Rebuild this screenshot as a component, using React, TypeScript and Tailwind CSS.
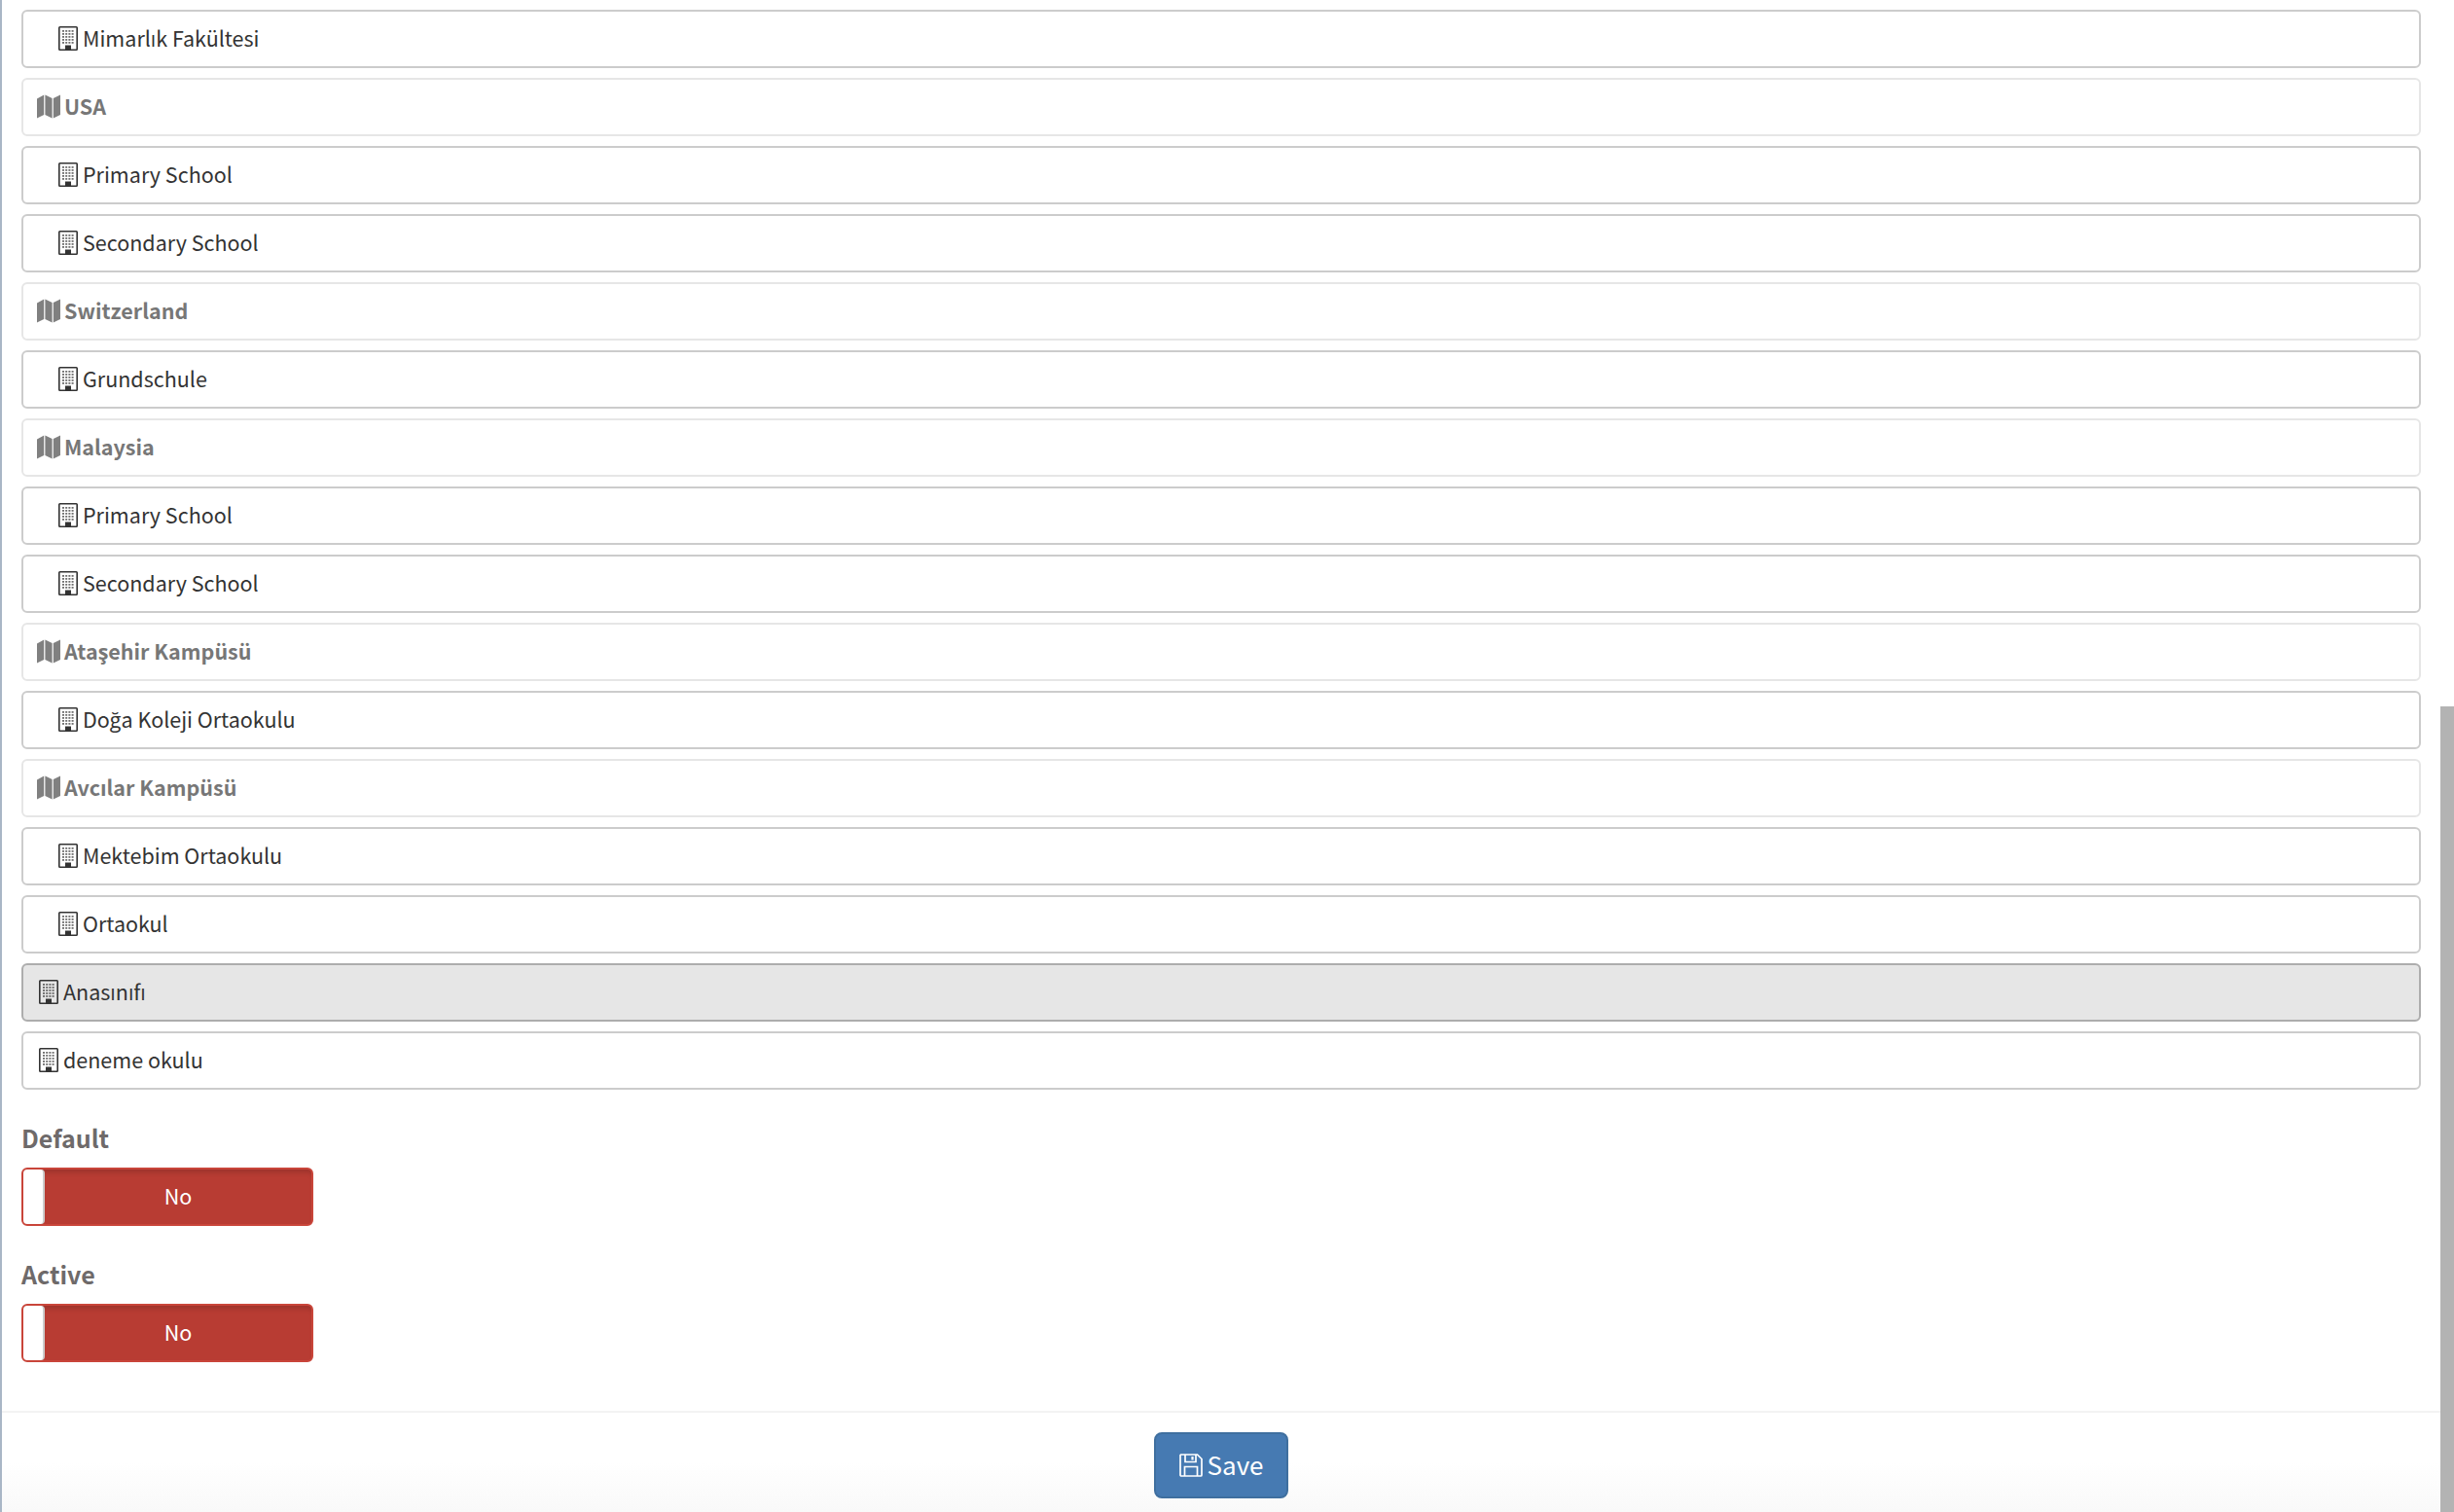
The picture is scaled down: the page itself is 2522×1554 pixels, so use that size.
type Row = { label: string; kind: "group" | "child" | "plain"; selected?: boolean };

const rows: Row[] = [
  { label: "Mimarlık Fakültesi", kind: "child" },
  { label: "USA", kind: "group" },
  { label: "Primary School", kind: "child" },
  { label: "Secondary School", kind: "child" },
  { label: "Switzerland", kind: "group" },
  { label: "Grundschule", kind: "child" },
  { label: "Malaysia", kind: "group" },
  { label: "Primary School", kind: "child" },
  { label: "Secondary School", kind: "child" },
  { label: "Ataşehir Kampüsü", kind: "group" },
  { label: "Doğa Koleji Ortaokulu", kind: "child" },
  { label: "Avcılar Kampüsü", kind: "group" },
  { label: "Mektebim Ortaokulu", kind: "child" },
  { label: "Ortaokul", kind: "child" },
  { label: "Anasınıfı", kind: "plain", selected: true },
  { label: "deneme okulu", kind: "plain" },
];

function BuildingIcon() {
  const dots = [];
  for (let r = 0; r < 5; r++) {
    for (let c = 0; c < 4; c++) {
      dots.push(<rect key={`${r}-${c}`} x={4 + c * 3.2} y={4 + r * 3} width="2" height="1.8" fill="currentColor" opacity="0.7" />);
    }
  }
  return (
    <svg viewBox="0 0 20 25" className="w-[20px] h-[25px] shrink-0 text-[#333]">
      <rect x="0.8" y="0.8" width="18.4" height="23.4" rx="0.8" fill="none" stroke="currentColor" strokeWidth="1.6" />
      {dots}
      <rect x="7" y="19.5" width="6" height="4.5" fill="currentColor" />
    </svg>
  );
}

function MapIcon() {
  return (
    <svg viewBox="0 0 24 25" className="w-[24px] h-[25px] shrink-0 text-[#808080]">
      <path d="M0 4.5 L7.2 0.5 V21 L0 24.5 Z" fill="currentColor" />
      <path d="M8.4 0.5 L15.6 4 V24.5 L8.4 21 Z" fill="currentColor" />
      <path d="M16.8 4 L24 0.5 V21 L16.8 24.5 Z" fill="currentColor" />
    </svg>
  );
}

function SaveIcon() {
  return (
    <svg viewBox="0 0 24 24" className="w-[24px] h-[24px] shrink-0 mt-[4px]" fill="none" stroke="currentColor" strokeWidth="1.7">
      <path d="M1.6 1H18.5L23 5.5V22A1 1 0 0 1 22 23H2A1 1 0 0 1 1 22V1.6Z" />
      <path d="M6 1V8.5H17V1" />
      <path d="M5.5 23V13.5H18.5V23" />
      <path d="M13.5 3V6.5" strokeWidth="2.2" />
    </svg>
  );
}

function ListRow({ row }: { row: Row }) {
  if (row.kind === "group") {
    return (
      <div className="h-[60px] flex items-center pl-[14px] pb-[2px] gap-[4px] rounded-[6px] border-2 border-[#e6e6e6] bg-white text-[21.5px] font-bold text-[#777]">
        <MapIcon />
        <span>{row.label}</span>
      </div>
    );
  }
  return (
    <div
      className={
        "h-[60px] flex items-center pb-[2px] gap-[5px] rounded-[6px] border-2 text-[21.5px] text-[#333] " +
        (row.kind === "child" ? "pl-[36px] " : "pl-[16px] ") +
        (row.selected ? "border-[#adadad] bg-[#e6e6e6]" : "border-[#ccc] bg-white")
      }
    >
      <BuildingIcon />
      <span>{row.label}</span>
    </div>
  );
}

function NoToggle({ label }: { label: string }) {
  return (
    <div>
      <div className="text-[25px] leading-[38px] font-bold text-[#6e6a6a] mb-[12px]">{label}</div>
      <div className="relative w-[300px] h-[60px] rounded-[6px] border-2 border-[#c9453a] bg-[#b83c33] shadow-[inset_0_6px_5px_-3px_rgba(0,0,0,0.15)] flex items-center justify-center pl-[22px] pb-[2px] text-[21.5px] text-white">
        No
        <div className="absolute left-0 top-0 bottom-0 w-[22px] rounded-[4px] bg-white border-r-2 border-[#ccc]" />
      </div>
    </div>
  );
}

export default function App() {
  return (
    <div
      className="relative w-[2522px] h-[1554px] overflow-hidden bg-white flex border-l-2 border-[#a9b6c6]"
      style={{ fontFamily: '"Noto Sans CJK SC", "Open Sans", sans-serif' }}
    >
      {/* bits of the page behind the modal showing at the left edge */}
      <div className="absolute -left-[2px] top-[8px] w-[2px] h-[8px] bg-[#2f6ba5]" />
      <div className="absolute -left-[2px] top-[138px] w-[2px] h-[86px] bg-[#8f9db0]" />

      <div className="flex-1 min-w-0 flex flex-col">
        <div className="flex-1 min-h-0 pl-[20px] pr-[20px] pt-[10px]">
          <div className="flex flex-col gap-[10px]">
            {rows.map((r, i) => (
              <ListRow key={i} row={r} />
            ))}
          </div>
          <div className="mt-[30px] flex flex-col gap-[30px]">
            <NoToggle label="Default" />
            <NoToggle label="Active" />
          </div>
        </div>
        <div className="h-[104px] shrink-0 border-t-2 border-[#f3f3f3] bg-gradient-to-b from-white via-white to-[#f9f9f9] flex justify-center pt-[20px]">
          <button className="w-[138px] h-[68px] rounded-[8px] border-2 border-[#3f6f9f] bg-[#467ab2] text-white text-[26px] flex items-center justify-center gap-[5px] pb-[4px]">
            <SaveIcon />
            Save
          </button>
        </div>
      </div>
      <div className="w-[14px] shrink-0 flex flex-col">
        <div className="h-[726px] shrink-0" />
        <div className="flex-1 bg-[#b3b3b3]" />
      </div>
    </div>
  );
}
